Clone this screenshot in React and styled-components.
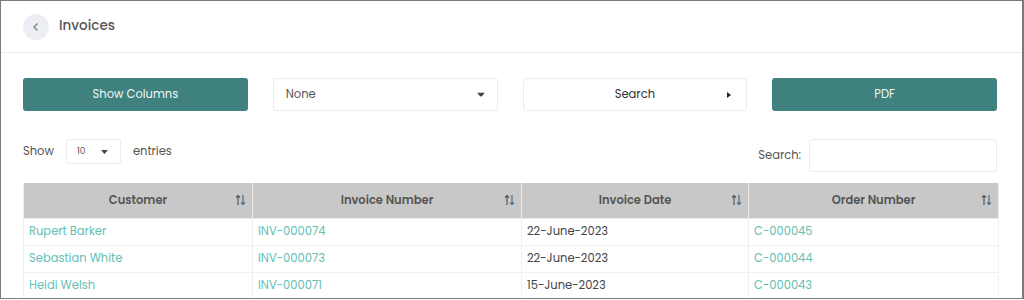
import React from "react";
import styled, { createGlobalStyle } from "styled-components";

const Global = createGlobalStyle`
  html, body { margin: 0; padding: 0; background: #fff; }
  body { font-family: "Poppins", "Inter", "DejaVu Sans", sans-serif; }
  * { box-sizing: border-box; }
`;

const Frame = styled.div`
  width: 1024px;
  height: 299px;
  border: 1px solid #7b7b7b;
  border-right-width: 2px;
  overflow: hidden;
  background: #fff;
`;

const Header = styled.div`
  height: 52px;
  display: flex;
  align-items: center;
  gap: 10px;
  padding-left: 22px;
  border-bottom: 1px solid #ececec;
`;

const BackButton = styled.div`
  width: 26px;
  height: 26px;
  border-radius: 50%;
  background: #edeef4;
  display: flex;
  align-items: center;
  justify-content: center;
`;

const Title = styled.div`
  font-size: 13.5px;
  font-weight: 500;
  color: #555;
  margin-top: -1px;
`;

const Body = styled.div`
  padding: 25px 25px 0 22px;
`;

const Toolbar = styled.div`
  display: grid;
  grid-template-columns: repeat(4, 1fr);
  column-gap: 25px;
`;

const TealButton = styled.div`
  height: 33px;
  border-radius: 3px;
  background: #3f817f;
  color: #eef5f4;
  font-size: 11.5px;
  font-weight: 400;
  display: flex;
  align-items: center;
  justify-content: center;
`;

const SelectBox = styled.div`
  height: 33px;
  border: 1px solid #ececec;
  border-radius: 3px;
  background: #fff;
  color: ${(p) => (p.$center ? "#333" : "#555")};
  font-size: 11.5px;
  display: flex;
  align-items: center;
  justify-content: ${(p) => (p.$center ? "center" : "flex-start")};
  padding: 0 12px;
  position: relative;
`;

const Caret = styled.span`
  position: absolute;
  right: ${(p) => p.$right || 12}px;
  top: 50%;
  transform: translateY(-50%);
  display: flex;
`;

const Controls = styled.div`
  display: flex;
  justify-content: space-between;
  align-items: center;
  margin-top: 28px;
  height: 33px;
`;

const Entries = styled.div`
  display: flex;
  align-items: center;
  font-size: 11.5px;
  color: #555;
  gap: 12px;
  margin-top: -8px;
`;

const SmallSelect = styled.div`
  width: 55px;
  height: 25px;
  border: 1px solid #ececec;
  border-radius: 3px;
  font-size: 9px;
  color: #555;
  display: flex;
  align-items: center;
  padding-left: 10px;
  position: relative;
`;

const SearchWrap = styled.div`
  display: flex;
  align-items: center;
  gap: 8px;
  font-size: 11.5px;
  color: #555;
`;

const SearchInput = styled.div`
  width: 188px;
  height: 33px;
  border: 1px solid #ececec;
  border-radius: 3px;
`;

const Table = styled.table`
  margin-top: 11px;
  width: 975px;
  border-collapse: collapse;
  table-layout: fixed;
  font-size: 11.5px;
`;

const Th = styled.th`
  height: 35px;
  background: #c8c8c8;
  color: #555;
  font-weight: 600;
  text-align: center;
  position: relative;
  border: 1px solid #ececec;
  border-top: none;
  padding: 0;
`;

const Td = styled.td`
  height: 27px;
  padding: 0 5px;
  border: 1px solid #f0f0f0;
  color: ${(p) => (p.$link ? "#62c0b4" : "#444")};
`;

const SortIcon = () => (
  <svg width="11" height="12" viewBox="0 0 11 12">
    <g fill="none" strokeWidth="1.2">
      <path d="M3 11V1.5M1 3.5L3 1.5L5 3.5" stroke="#555" />
      <path d="M8 1V10.5M6 8.5L8 10.5L10 8.5" stroke="#4a6f90" />
    </g>
  </svg>
);

const SortSlot = styled.span`
  position: absolute;
  right: 6px;
  top: 50%;
  transform: translateY(-50%);
  display: flex;
`;

const Down = ({ size = 8 }) => (
  <svg width={size} height={size * 0.6} viewBox="0 0 10 6">
    <path d="M0 0H10L5 6Z" fill="#444" />
  </svg>
);

const columns = [
  { label: "Customer", w: 229 },
  { label: "Invoice Number", w: 269 },
  { label: "Invoice Date", w: 227 },
  { label: "Order Number", w: 250 },
];

const rows = [
  ["Rupert Barker", "INV-000074", "22-June-2023", "C-000045"],
  ["Sebastian White", "INV-000073", "22-June-2023", "C-000044"],
  ["Heidi Welsh", "INV-000071", "15-June-2023", "C-000043"],
];

export default function App() {
  return (
    <>
      <Global />
      <Frame>
        <Header>
          <BackButton>
            <svg width="10" height="10" viewBox="0 0 10 10">
              <path d="M6.5 1.5L3 5L6.5 8.5" fill="none" stroke="#8a8e99" strokeWidth="1.6" />
            </svg>
          </BackButton>
          <Title>Invoices</Title>
        </Header>
        <Body>
          <Toolbar>
            <TealButton>Show Columns</TealButton>
            <SelectBox>
              None
              <Caret>
                <Down />
              </Caret>
            </SelectBox>
            <SelectBox $center>
              Search
              <Caret $right={15}>
                <svg width="4" height="6" viewBox="0 0 4 6">
                  <path d="M0 0L4 3L0 6Z" fill="#222" />
                </svg>
              </Caret>
            </SelectBox>
            <TealButton>PDF</TealButton>
          </Toolbar>
          <Controls>
            <Entries>
              Show
              <SmallSelect>
                10
                <Caret $right={12}>
                  <Down size={7} />
                </Caret>
              </SmallSelect>
              entries
            </Entries>
            <SearchWrap>
              Search:
              <SearchInput />
            </SearchWrap>
          </Controls>
          <Table>
            <colgroup>
              {columns.map((c) => (
                <col key={c.label} style={{ width: c.w }} />
              ))}
            </colgroup>
            <thead>
              <tr>
                {columns.map((c) => (
                  <Th key={c.label}>
                    {c.label}
                    <SortSlot>
                      <SortIcon />
                    </SortSlot>
                  </Th>
                ))}
              </tr>
            </thead>
            <tbody>
              {rows.map((r) => (
                <tr key={r[1]}>
                  <Td $link>{r[0]}</Td>
                  <Td $link>{r[1]}</Td>
                  <Td>{r[2]}</Td>
                  <Td $link>{r[3]}</Td>
                </tr>
              ))}
            </tbody>
          </Table>
        </Body>
      </Frame>
    </>
  );
}
